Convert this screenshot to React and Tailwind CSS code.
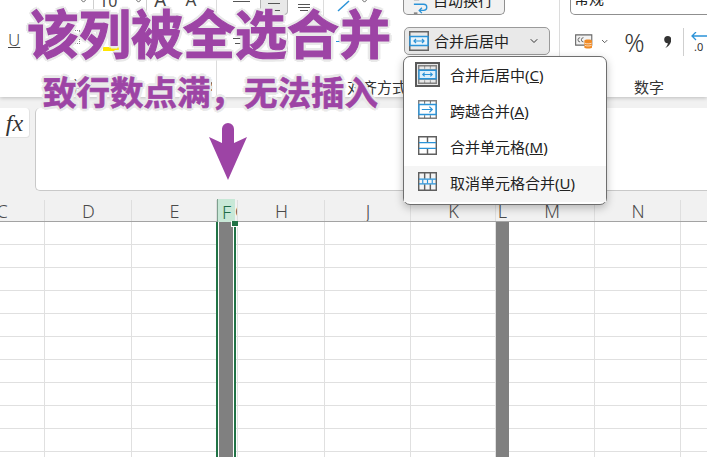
import React from 'react';
import { ChevronDown } from 'lucide-react';

const columns = [
  { name: 'C', w: 'w-[86px] -ml-[41px]', line: true },
  { name: 'D', w: 'w-[87px]', line: true },
  { name: 'E', w: 'w-[85px]', line: true },
  { name: 'F', w: 'w-[18px]', active: true },
  { name: 'G', w: 'w-[3px]', narrow: true, line: true },
  { name: 'H', w: 'w-[87px]', line: true },
  { name: 'J', w: 'w-[86px]', line: true },
  { name: 'K', w: 'w-[85px]', line: true },
  { name: 'L', w: 'w-[13px]', merged: true },
  { name: 'M', w: 'w-[86px]', line: true },
  { name: 'N', w: 'w-[86px]', line: true },
  { name: '', w: 'w-[86px]', line: true },
];

const rows = Array.from({ length: 11 }, (_, i) => i);

const menuItems = [
  { label: '合并后居中', key: 'C', kind: 'center', selected: true },
  { label: '跨越合并', key: 'A', kind: 'across' },
  { label: '合并单元格', key: 'M', kind: 'merge' },
  { label: '取消单元格合并', key: 'U', kind: 'split', hover: true },
];

const MergeIcon = ({ kind, className = '' }) => {
  const gray = '#5f5f5f';
  const blue = '#2b93d8';
  return (
    <svg viewBox="0 0 20 20" className={className} fill="none">
      {kind === 'center' && (
        <>
          <path d="M.75.75h18.5v18.5H.75z" stroke={gray} strokeWidth="1.5" opacity=".75" />
          <path d="M1 4.75h18M7 1v3M13 1v3M1 15.25h18M7 16v3M13 16v3" stroke={gray} strokeWidth="1" opacity=".6" />
          <path d="M1 5.500h18v9H1z" fill="#dff0fb" stroke={blue} strokeWidth="1.500" />
          <path d="M5 10h10M7 8 5 10l2 2M13 8l2 2-2 2" stroke={blue} strokeWidth="1.200" />
        </>
      )}
      {kind === 'across' && (
        <>
          <path d="M.75.75h18.5v18.5H.75z" stroke={gray} strokeWidth="1.5" opacity=".8" />
          <path d="M7 1v3M13 1v3M7 16v3M13 16v3" stroke={gray} strokeWidth="1" />
          <path d="M1 4.75h18v10.5H1z" fill="#fff" stroke={blue} strokeWidth="1.5" />
          <path d="M4 10h11M12 7l3 3-3 3" stroke={blue} strokeWidth="1.3" />
        </>
      )}
      {kind === 'merge' && (
        <>
          <path d="M.75.75h18.5v18.5H.75zM10 1v6M10 13v6" stroke={gray} strokeWidth="1.5" />
          <path d="M1 7h18M1 13h18" stroke={blue} strokeWidth="1.5" />
        </>
      )}
      {kind === 'split' && (
        <>
          <path d="M.75.75h18.5v18.5H.75zM7 1v6M13 1v6M7 13v6M13 13v6" stroke={gray} strokeWidth="1.5" />
          <path d="M1 7.500h18M1 12.500h18" stroke={blue} strokeWidth="1.500" />
          <path d="M5 8v4M10 8v4M15 8v4" stroke={blue} strokeWidth="1.200" />
        </>
      )}
    </svg>
  );
};

const FontGroup = () => (
  <div className="w-[217px] shrink-0 border-r border-[#dcdcdc] flex flex-col">
    <div className="h-[16px] flex items-start overflow-hidden text-[#444]">
      <ChevronDown size={13} strokeWidth={1.5} className="ml-[77px] -mt-[6px]" />
      <div className="w-px h-[13px] bg-[#cfcfcf] ml-[3px]" />
      <span className="ml-[5px] -mt-[9px] text-[16px] leading-[20px]">10</span>
      <ChevronDown size={13} strokeWidth={1.5} className="ml-[15px] -mt-[6px]" />
      <div className="w-px h-[13px] bg-[#cfcfcf] ml-[1px]" />
      <span className="ml-[7px] -mt-[10px] text-[19px] leading-[20px]">A</span>
      <span className="ml-[19px] -mt-[10px] text-[17px] leading-[20px]">A</span>
    </div>
    <div className="h-[38px] flex items-start pt-[22px]">
      <span className="ml-[8px] -mt-[8px] text-[17px] leading-[20px] underline font-light text-[#444]">U</span>
      <div className="ml-[46px] -mt-[8px] w-[14px] h-[14px] border border-dotted border-[#888]" />
      <div className="ml-[16px] -mt-[8px] w-px h-[26px] bg-[#dcdcdc]" />
      <div className="ml-[6px] mt-[9px] w-[19px] h-[4px] bg-[#ffe600]" />
      <div className="ml-[46px] mt-[8px] w-[6px] h-[4px] bg-[#e81010]" />
    </div>
    <div className="flex items-center mt-[22px] text-[15px] leading-[20px] text-[#333]">
      <span className="ml-[68px]">字体</span>
      <div className="ml-auto mr-[4px] w-[5px] h-[9px] border-r border-b border-[#555]" />
    </div>
  </div>
);

const AlignGroup = () => (
  <div className="w-[343px] shrink-0 border-r border-[#dcdcdc] flex flex-col">
    <div className="h-[16px] flex items-start text-[#444]">
      <div className="ml-[16px] w-[17px] mt-[1px] h-px bg-[#555]" />
      <div className="ml-[10px] w-[28px] h-[15px] bg-[#e8e8e8] border-x border-b border-[#b5b5b5] rounded-b-[4px] pt-[3px] px-[7px] flex flex-col gap-[6px]">
        <div className="h-px bg-[#555]" />
        <div className="h-px bg-[#555]" />
      </div>
      <div className="ml-[10px] w-[12px] mt-[4px] flex flex-col gap-[2px]">
        <div className="h-px bg-[#555]" />
        <div className="h-px bg-[#555]" />
        <div className="h-px bg-[#555] mx-[2px]" />
      </div>
      <div className="ml-[13px] w-px h-[16px] bg-[#dcdcdc]" />
      <svg viewBox="0 0 16 12" className="ml-[13px] w-[16px] h-[12px]" fill="none">
        <path d="M1 11 12 1" stroke="#2b93d8" strokeWidth="1.5" />
      </svg>
      <ChevronDown size={13} strokeWidth={1.5} className="ml-[5px] -mt-[6px]" />
      <div className="ml-[32px] -mt-[2px] h-[17px] w-[102px] shrink-0 overflow-hidden bg-[#f1f1f1] border-x border-b border-[#8f8f8f] rounded-b-[5px] flex items-end">
        <svg viewBox="0 0 20 18" className="ml-[8px] w-[18px] h-[16px]" fill="none">
          <path d="M2 7h11a3.5 3.5 0 0 1 0 7H8M11 11l-3 3 3 3" stroke="#2b93d8" strokeWidth="1.5" />
          <path d="M8 2H2M6 17H2" stroke="#666" strokeWidth="1.3" />
        </svg>
        <span className="ml-[3px] text-[15px] leading-[20px] mb-[4px] text-[#222]">自动换行</span>
      </div>
    </div>
    <div className="h-[29px] mt-[11px] flex items-center">
      <div className="ml-[16px] w-[17px] flex flex-col gap-[4px]">
        <div className="h-px bg-[#555]" />
        <div className="h-px bg-[#555] mx-[2px]" />
      </div>
      <div className="ml-[37px] w-px h-[24px] bg-[#cfcfcf]" />
      <div className="ml-[48px] w-[5px] h-px bg-[#2b93d8]" />
      <div className="ml-[6px] w-[20px] flex flex-col gap-[4px]">
        <div className="h-px bg-[#555]" />
        <div className="h-px bg-[#555] mx-[2px]" />
      </div>
      <div className="ml-[37px] w-[146px] h-[28px] shrink-0 bg-[#e9e9e9] border border-[#9a9a9a] rounded-[5px] flex items-center">
        <svg viewBox="0 0 20 20" className="ml-[4px] w-[20px] h-[20px]" fill="none">
          <path d="M.75.75h18.5v18.5H.75z" stroke="#666" strokeWidth="1.5" />
          <path d="M1 5.5h18v9H1z" fill="#e9f4fb" stroke="#2b93d8" strokeWidth="1.5" />
          <path d="M5 10h10M7 8 5 10l2 2M13 8l2 2-2 2" stroke="#2b93d8" strokeWidth="1.2" />
        </svg>
        <span className="ml-[5px] text-[15px] leading-[20px] text-[#222]">合并后居中</span>
        <ChevronDown size={12} strokeWidth={2} className="ml-[19px] text-[#333]" />
      </div>
    </div>
    <div className="mt-[22px] pl-[130px] text-[15px] leading-[20px] text-[#333]">对齐方式</div>
  </div>
);

const NumberGroup = () => (
  <div className="flex-1 flex flex-col min-w-0">
    <div className="h-[16px] ml-[10px] -mr-[20px] -mt-[1px] border-x border-b border-[#8f8f8f] rounded-b-[5px] overflow-hidden flex items-end">
      <span className="ml-[3px] mb-[6px] text-[15px] leading-[20px] text-[#222]">常规</span>
    </div>
    <div className="h-[29px] mt-[12px] flex items-center">
      <svg viewBox="0 0 21 17" className="ml-[15px] w-[21px] h-[17px]" fill="none">
        <path d="M.75.75h19v12H.75z" fill="#f3f3f3" stroke="#666" strokeWidth="1.3" />
        <path d="M6 4a2 2 0 0 0 0 5M10 4a2 2 0 0 0 0 5" stroke="#555" strokeWidth="1" />
        <path d="M11 7.5c0-1.8 9-1.8 9 0v8c0 1.6-9 1.6-9 0z" fill="#f08a24" />
        <path d="M11.5 10.5c2 1 6 1 8 0M11.5 13c2 1 6 1 8 0" stroke="#fff" strokeWidth=".8" />
      </svg>
      <ChevronDown size={11} strokeWidth={2} className="ml-[7px] text-[#333]" />
      <span className="ml-[15px] text-[25px] leading-[28px] font-light text-[#333]">%</span>
      <svg viewBox="0 0 10 16" className="ml-[19px] w-[9px] h-[16px]">
        <path d="M5 0a4.5 4.5 0 0 1 4.5 5C9.500 10 6 14 1.500 16 4 13 5 11 5 9.500A4.700 4.700 0 0 1 5 0z" fill="#333" />
      </svg>
      <div className="ml-[12px] w-px h-[28px] bg-[#cfcfcf]" />
      <div className="ml-[7px] flex flex-col">
        <svg viewBox="0 0 16 9" className="w-[16px] h-[9px]" fill="none">
          <path d="M16 4H1M5 0 1 4l4 4" stroke="#2b93d8" strokeWidth="1.300" />
        </svg>
        <span className="ml-[3px] text-[11px] leading-[11px] text-[#333]">.0</span>
      </div>
    </div>
    <div className="mt-[21px] pl-[74px] text-[15px] leading-[20px] text-[#333]">数字</div>
  </div>
);

const Ribbon = () => (
  <div className="relative z-10 h-[97px] flex bg-white shadow-[0_1px_4px_rgba(0,0,0,0.22)]">
    <FontGroup />
    <AlignGroup />
    <NumberGroup />
  </div>
);

const FormulaBar = () => (
  <div className="h-[100px] pt-[11px] flex items-start bg-[#f1f1f1]">
    <div className="w-[30px] h-[30px] bg-white rounded-r-[4px] border-r border-b border-[#e2e2e2] flex items-center justify-center font-['Liberation_Serif',serif] italic text-[24px] text-[#333]">
      fx
    </div>
    <div className="ml-[5px] flex-1 h-[83px] bg-white rounded-l-[5px] border-l border-b border-[#c9c9c9]" />
  </div>
);

const HeaderRow = () => (
  <div className="h-[25px] flex bg-[#f1f1f1] border-b border-[#a3a3a3] text-[#4a4a4a] text-[18px] font-light leading-none">
    {columns.map((col) => (
      <div
        key={col.name || 'end'}
        className={`${col.w} shrink-0 h-[24px] pt-[3px] overflow-hidden flex items-center ${col.narrow ? 'justify-start' : 'justify-center'} ${col.active ? 'mt-[2px] pt-px bg-[#c8e8d7] border-l border-[#7fa08f] text-[#1d6b4a]' : ''} ${col.line ? 'relative' : ''}`}
      >
        <span>{col.name}</span>
        {col.line && <div className="absolute right-0 top-[3px] bottom-0 w-px bg-[#dedede]" />}
      </div>
    ))}
  </div>
);

const cellStyle = (col) => {
  if (col.active) return 'bg-[#808080] border-l-2 border-r-2 border-white';
  if (col.merged) return 'bg-[#808080]';
  return 'border-r border-b border-[#e0e0e0]';
};

const Grid = () => (
  <div className="bg-white">
    {rows.map((r) => (
      <div key={r} className="h-[23px] flex">
        {columns.map((col) => (
          <div key={col.name || 'end'} className={`${col.w} shrink-0 h-full ${cellStyle(col)}`} />
        ))}
      </div>
    ))}
  </div>
);

const MergeMenu = () => (
  <div className="absolute z-20 left-[403px] top-[56px] w-[204px] h-[149px] py-px bg-white border border-[#6e6e6e] rounded-[7px] shadow-[0_3px_8px_rgba(0,0,0,0.25)]">
    {menuItems.map((item) => (
      <div key={item.key} className={`h-[36px] flex items-start ${item.hover ? 'bg-[#f5f5f5]' : ''}`}>
        <div className="w-[46px] flex justify-center">
          {item.selected ? (
            <div className="mt-[4px] w-[25px] h-[25px] border-2 border-[#5a5a5a] bg-[#e8e8e8] flex items-center justify-center">
              <MergeIcon kind={item.kind} className="w-[19px] h-[19px]" />
            </div>
          ) : (
            <MergeIcon kind={item.kind} className="mt-[6px] w-[19px] h-[19px]" />
          )}
        </div>
        <span className="mt-[7px] text-[15px] leading-[20px] text-[#222]">
          {item.label}(<u>{item.key}</u>)
        </span>
      </div>
    ))}
  </div>
);

const DownArrow = () => (
  <svg viewBox="0 0 38 57" className="absolute z-30 left-[209px] top-[123px] w-[38px] h-[57px]">
    <path d="M13 20V6a6 6 0 0 1 12 0v14l13-6-19 43L0 14z" fill="#9d44a5" />
  </svg>
);

const outlined =
  'absolute z-30 whitespace-nowrap font-bold text-[#9d44a5] leading-none [text-shadow:3px_0_0_#e9e9e9,-3px_0_0_#e9e9e9,0_3px_0_#e9e9e9,0_-3px_0_#e9e9e9,2px_2px_0_#e9e9e9,-2px_2px_0_#e9e9e9,2px_-2px_0_#e9e9e9,-2px_-2px_0_#e9e9e9]';

export default function App() {
  return (
    <div className="relative w-[707px] h-[457px] overflow-hidden bg-white font-['Noto_Sans','Noto_Sans_CJK_SC',sans-serif]">
      <Ribbon />
      <FormulaBar />
      <HeaderRow />
      <Grid />

      {/* 选区边框和填充柄 */}
      <div className="absolute z-[5] left-[216px] top-[222px] bottom-0 w-[20px] border-l-2 border-r-2 border-[#217346]" />
      <div className="absolute z-[6] left-[231px] top-[221px] w-[7px] h-[6px] bg-[#217346] border-l border-b border-white" />

      <MergeMenu />
      <DownArrow />
      <div className={`${outlined} left-[27px] top-[8px] text-[52px] [-webkit-text-stroke:1.1px_#9d44a5]`}>该列被全选合并</div>
      <div className={`${outlined} left-[43px] top-[76px] text-[33.5px] [-webkit-text-stroke:0.6px_#9d44a5]`}>致行数点满，无法插入</div>
    </div>
  );
}
